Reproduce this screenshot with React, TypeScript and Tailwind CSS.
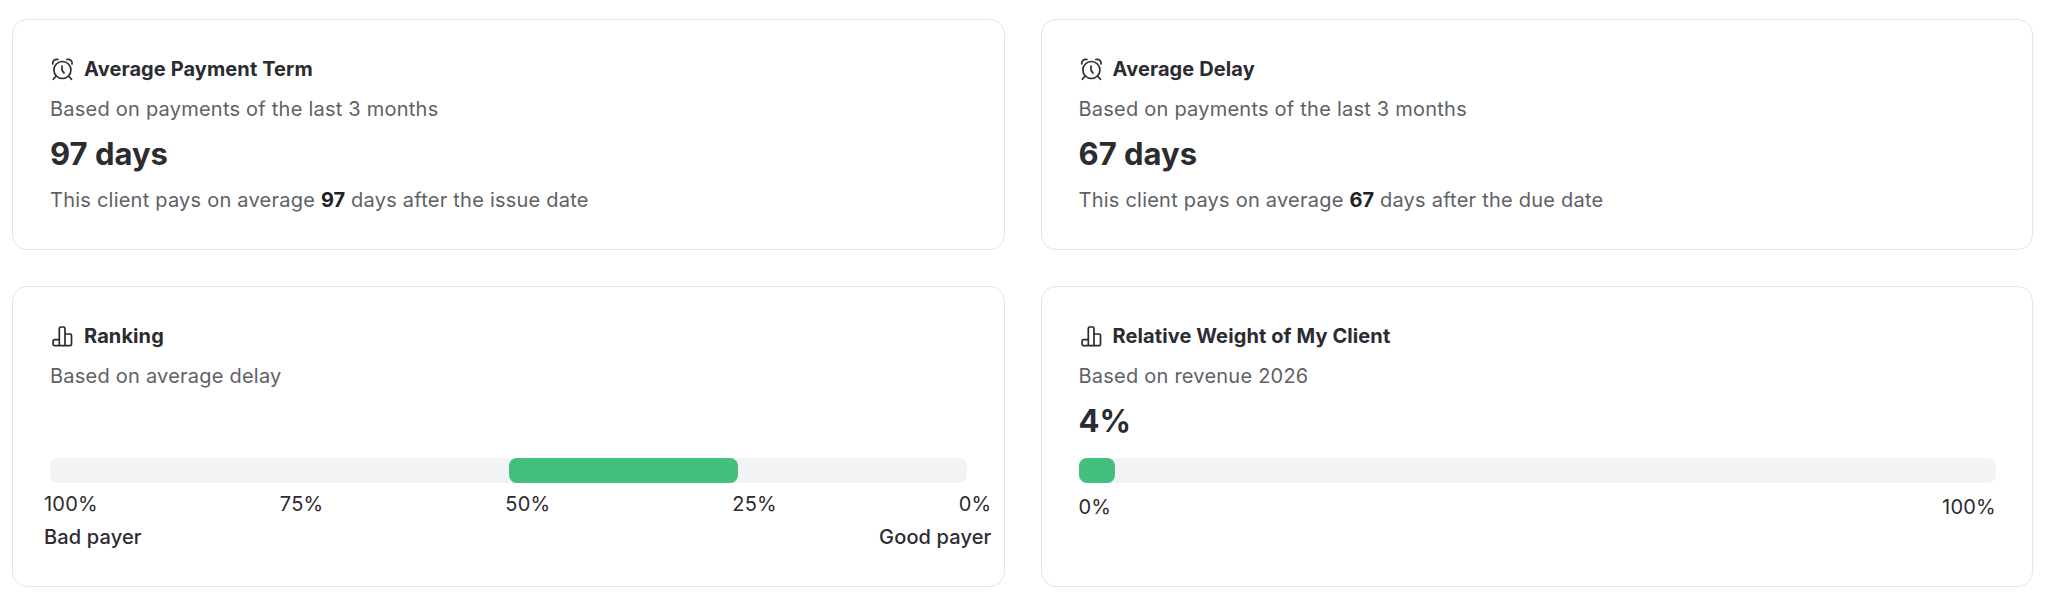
import type { ReactNode } from 'react';

const AlarmIcon = () => (
  <svg
    className="w-[25px] h-[25px] shrink-0"
    viewBox="0 0 25 25"
    fill="none"
    stroke="currentColor"
    strokeWidth="1.7"
    strokeLinecap="round"
    strokeLinejoin="round"
  >
    <circle cx="12.4" cy="13" r="8.5" />
    <path d="M12 9.2v4l2 2.900" />
    <path d="M6 19.300l-2.700 3M18.800 19.300l2.700 3" />
    <path d="M2.700 7C2.300 4 4.600 1.900 7.900 2.500M22.100 7C22.500 4 20.200 1.900 16.900 2.500" />
  </svg>
);

const ChartIcon = () => (
  <svg
    className="w-[25px] h-[25px] shrink-0"
    viewBox="0 0 25 25"
    fill="none"
    stroke="currentColor"
    strokeWidth="1.7"
    strokeLinejoin="round"
  >
    <path d="M9.300 21.700V4.500a1.500 1.500 0 0 1 1.500-1.500h2.700a1.500 1.500 0 0 1 1.500 1.500v17.200" />
    <path d="M9.300 15.600H4.600a1.500 1.500 0 0 0-1.500 1.500v3.100a1.500 1.500 0 0 0 1.500 1.500H20a1.500 1.500 0 0 0 1.500-1.500v-8.700a1.500 1.500 0 0 0-1.500-1.500h-5" />
  </svg>
);

type CardProps = {
  icon: ReactNode;
  title: string;
  subtitle: string;
  children: ReactNode;
};

const Card = ({ icon, title, subtitle, children }: CardProps) => (
  <div className="border border-[#e5e5e5] rounded-[15px] py-[37px] pl-[37px] pr-[36.5px] bg-white">
    <div className="flex items-center gap-[9px]">
      {icon}
      <h2 className="font-bold tracking-[0.1px]">{title}</h2>
    </div>
    <p className="mt-[15px] text-[#5f6165]">{subtitle}</p>
    {children}
  </div>
);

const BigValue = ({ children }: { children?: ReactNode }) => (
  <p className="mt-[13px] h-[38px] text-[31px] leading-[38px] tracking-normal font-bold">{children}</p>
);

const Bar = ({ start, size }: { start: number; size: number }) => (
  <div className="mt-[18px] h-[25px] rounded-lg bg-[#f2f3f5]">
    <div
      className="h-full rounded-lg bg-[#43bf80]"
      style={{ marginLeft: `${start}%`, width: `${size}%` }}
    />
  </div>
);

const delayCards = [
  { title: 'Average Payment Term', days: 97, from: 'issue' },
  { title: 'Average Delay', days: 67, from: 'due' },
];

const scale = ['100%', '75%', '50%', '25%', '0%'];

const App = () => {
  return (
    <div className="min-h-[601px] bg-white pt-[19px] pl-3 pr-5 font-['Inter',sans-serif] text-[20px] leading-[25px] tracking-[0.23px] text-[#2b2b30]">
      <div className="grid grid-cols-2 grid-rows-[231px_301px] gap-9">
        {delayCards.map((card) => (
          <Card
            key={card.title}
            icon={<AlarmIcon />}
            title={card.title}
            subtitle="Based on payments of the last 3 months"
          >
            <BigValue>{card.days} days</BigValue>
            <p className="mt-[15px] text-[#5f6165]">
              This client pays on average{' '}
              <span className="font-bold tracking-normal text-[#1f1f24]">{card.days}</span> days after the {card.from} date
            </p>
          </Card>
        ))}

        <Card icon={<ChartIcon />} title="Ranking" subtitle="Based on average delay">
          <BigValue />
          <Bar start={50} size={25} />
          {/* Scale runs a bit wider than the bar on both sides */}
          <div className="mt-[9px] -ml-1.5 -mr-[24.5px]">
            <div className="flex justify-between">
              {scale.map((label) => (
                <span key={label}>{label}</span>
              ))}
            </div>
            <div className="mt-2 flex justify-between font-medium tracking-[0.14px]">
              <span>Bad payer</span>
              <span>Good payer</span>
            </div>
          </div>
        </Card>

        <Card icon={<ChartIcon />} title="Relative Weight of My Client" subtitle="Based on revenue 2026">
          <BigValue>4%</BigValue>
          <Bar start={0} size={4} />
          <div className="mt-3 -mr-[0.5px] flex justify-between">
            <span>0%</span>
            <span>100%</span>
          </div>
        </Card>
      </div>
    </div>
  );
};

export default App;
